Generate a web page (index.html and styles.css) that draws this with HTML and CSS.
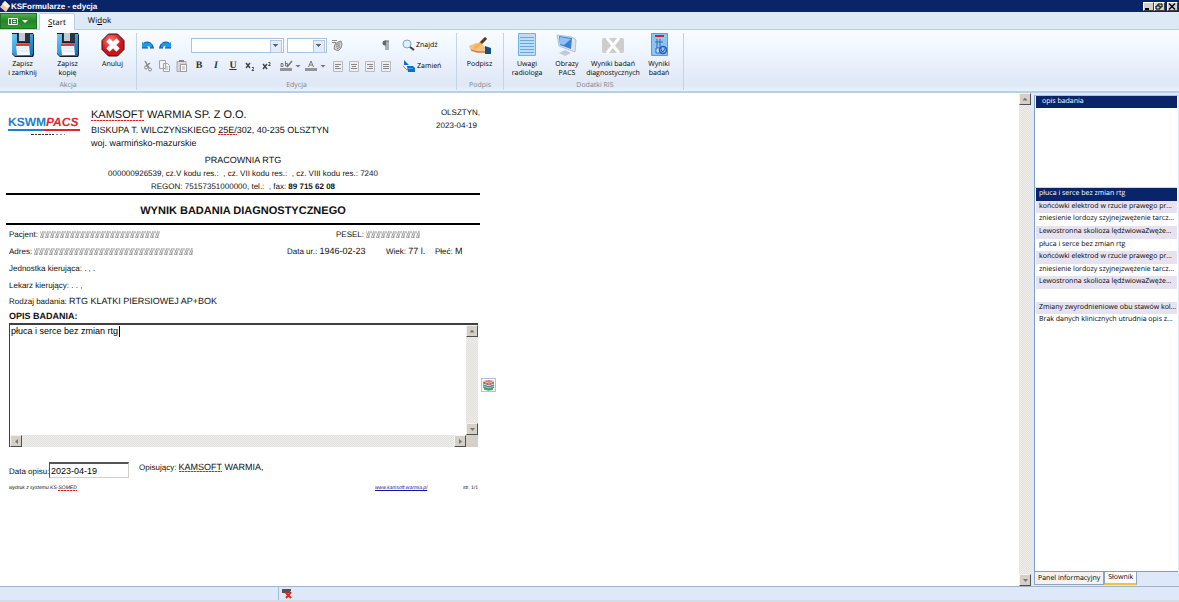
FILE: index.html
```html
<!DOCTYPE html>
<html lang="pl">
<head>
<meta charset="utf-8">
<title>KSFormularze - edycja</title>
<link rel="stylesheet" href="styles.css">
</head>
<body>
<svg class="defs" width="0" height="0" aria-hidden="true">
  <defs>
    <linearGradient id="blue" x1="0" y1="0" x2="1" y2="1"><stop offset="0" stop-color="#6ccdf6"/><stop offset="1" stop-color="#0f6ab8"/></linearGradient>
    <radialGradient id="red" cx=".4" cy=".3"><stop offset="0" stop-color="#ff7a70"/><stop offset="1" stop-color="#d01218"/></radialGradient>
    <pattern id="smear" width="5" height="8" patternUnits="userSpaceOnUse"><path d="M0 7 3 0M2 7 5 0M0 0l3 7M3 0v7M0 6l3 1" stroke="#8c8c8c" stroke-width=".6" fill="none"/></pattern>
    <symbol id="floppy" viewBox="0 0 24 24"><path d="M1 0h21l1 2v20l-1 2H4l-3-3z" fill="#16202a"/><path d="M1 1h5v9h13V1h3v20l-1 2H4l-3-3z" fill="url(#blue)"/><path d="M7 0h12v9H7z" fill="#2a343d"/><path d="M8 0h6v8H8z" fill="#c3ccd3"/><path d="M5 12h13l1 10H6z" fill="#f6f8fb"/><path d="M5 11h13v2H5z" fill="#e03a3a"/><path d="M7 15h10M7 18h10" stroke="#dce2e9"/></symbol>
    <symbol id="undo" viewBox="0 0 12 8"><path d="M0 7V1l2 1c3-2 8-1 10 5H8c0-2-2-2-3-1l1 1z" fill="#1e9be8"/><path d="M2 2c3-2 8-1 9 4M0 7h6M8 7h4" stroke="#0b4da8" fill="none"/></symbol>
  </defs>
</svg>
<header class="title">
  <svg width="10" height="11" viewBox="0 0 10 11"><path d="M5 0l5 5-4 6-6-5z" fill="#f3c9a5"/><path d="M5 0l5 5-3 2-5-4z" fill="#fff3e6"/></svg>
  <h1>KSFormularze - edycja</h1>
  <div class="winbtns">
    <button aria-label="Minimalizuj"><svg width="8" height="7"><path d="M1 6h4" stroke="#000" stroke-width="2"/></svg></button><button aria-label="Przywróć"><svg width="8" height="7"><path d="M3 3V1h4v3H5M1 3h4v3H1z" stroke="#000" fill="none"/></svg></button><button class="close" aria-label="Zamknij"><svg width="8" height="7"><path d="M1 .5l6 6M7 .5l-6 6" stroke="#000" stroke-width="1.400"/></svg></button>
  </div>
</header>
<nav class="tabs">
  <button class="app" aria-label="Menu"><svg width="23" height="9" viewBox="0 0 23 9"><path d="M1.500 1.500h9v6h-9zM4.500 1v7M6 3.500h3M6 5.500h3" stroke="#fff" fill="none"/><path d="M15 3h6l-3 3z" fill="#fff"/></svg></button>
  <button class="tab on"><u>S</u>tart</button>
  <button class="tab">Wi<u>d</u>ok</button>
</nav>
<section class="ribbon">
  <div class="group g-action">
    <div class="tools">
      <button class="big"><svg width="24" height="24"><use href="#floppy"/></svg>Zapisz<br>i zamknij</button>
      <button class="big"><svg width="24" height="24"><use href="#floppy"/></svg>Zapisz<br>kopię</button>
      <button class="big"><svg width="24" height="24" viewBox="0 0 24 24"><path d="M7.500 1h9L23 7.500v9L16.500 23h-9L1 16.500v-9z" fill="url(#red)" stroke="#3b1010"/><path d="M7 7l10 10M17 7L7 17" stroke="#c9c9c9" stroke-width="5"/><path d="M7 7l10 10M17 7L7 17" stroke="#fff" stroke-width="4"/></svg>Anuluj</button>
    </div>
    <h2>Akcja</h2>
  </div>
  <div class="group g-edit">
    <div class="tools edit">
      <div class="line">
        <button class="ic" aria-label="Cofnij"><svg width="12" height="8"><use href="#undo"/></svg></button>
        <button class="ic flip" aria-label="Ponów"><svg width="12" height="8"><use href="#undo"/></svg></button>
        <span class="combo font"><select aria-label="Czcionka"><option></option></select></span>
        <span class="combo size"><select aria-label="Rozmiar"><option></option></select></span>
        <button class="ic brush" aria-label="Hiperłącze"><svg width="12" height="12" viewBox="0 0 12 12"><path d="M1 1.500h5M1 3.500h4" stroke="#888"/><path d="M4 5l3-2 3-1 1 3-1 4-3 3-4-2z" fill="#d0d0d0" stroke="#8a8a8a"/><path d="M5 6l4-2M5 8l4-2M6 10l3-2" stroke="#888"/></svg></button>
        <button class="ic para" aria-label="Znaki akapitu"><svg width="10" height="10" viewBox="0 0 10 10"><path d="M8 1H4M5 1v9M7 1v9" stroke="#666" fill="none"/><path d="M5 .5H4a2 2 0 0 0 0 5h1z" fill="#666"/></svg></button>
        <button class="cmd"><svg width="13" height="12" viewBox="0 0 13 12"><circle cx="5" cy="5" r="4" fill="#d9f3fa" stroke="#8aa3ac"/><path d="M8 8l4 3" stroke="#39444a" stroke-width="2"/></svg>Znajdź</button>
      </div>
      <div class="line">
        <button class="ic" aria-label="Wytnij"><svg width="10" height="12" viewBox="0 0 10 12"><path d="M2 1l4 7M7 3L3 6" stroke="#888" stroke-width="1.500"/><circle cx="3" cy="7.500" r="1.500" fill="none" stroke="#888"/><circle cx="7" cy="9.500" r="1.500" fill="none" stroke="#888"/></svg></button>
        <button class="ic" aria-label="Kopiuj"><svg width="12" height="12" viewBox="0 0 12 12"><path d="M.5.5h6v8h-6zM4.500 3.500h4l2 2v6h-6z" fill="#f3f3f3" stroke="#a4a4a4"/><path d="M6 7h3M6 9h3" stroke="#b5b5b5"/></svg></button>
        <button class="ic" aria-label="Wklej"><svg width="12" height="12" viewBox="0 0 12 12"><path d="M1 1.500h9v10H1z" fill="#d7d7d7" stroke="#aaa"/><path d="M4.500 4.500h6v7h-6z" fill="#fafafa" stroke="#999"/><path d="M3 1h5" stroke="#888" stroke-width="2"/><path d="M6 7h3M6 9h3" stroke="#aaa"/></svg></button>
        <button class="ic ch" aria-label="Pogrubienie"><b>B</b></button>
        <button class="ic ch" aria-label="Kursywa"><b><i>I</i></b></button>
        <button class="ic ch" aria-label="Podkreślenie"><b><u>U</u></b></button>
        <button class="ic" aria-label="Indeks dolny"><svg width="10" height="10" viewBox="0 0 10 10"><path d="M1 2l4 5M5 2L1 7" stroke="#444" stroke-width="1.500"/><path d="M7 6.500h1.500v1L7 9.500h2" stroke="#444" fill="none"/></svg></button>
        <button class="ic" aria-label="Indeks górny"><svg width="10" height="10" viewBox="0 0 10 10"><path d="M1 3l4 5M5 3L1 8" stroke="#444" stroke-width="1.500"/><path d="M6.500 1.500H8v1L6.500 4.500h2" stroke="#444" fill="none"/></svg></button>
        <button class="ic hi" aria-label="Kolor wyróżnienia"><svg width="13" height="12" viewBox="0 0 13 12"><path d="M1 3.500h2v3H1zM5.500 1v5h2V3.500h-2" stroke="#777" fill="none"/><path d="M7 7l5-6" stroke="#777" stroke-width="1.500"/><path d="M0 8h12v3H0z" fill="#949494"/></svg></button>
        <button class="drop" aria-label="Wybierz wyróżnienie"></button>
        <button class="ic" aria-label="Kolor tekstu"><svg width="13" height="12" viewBox="0 0 13 12"><path d="M3.500 7L6 1l2.500 6M4.500 5h3" stroke="#777" fill="none"/><path d="M0 8h12v3H0z" fill="#949494"/></svg></button>
        <button class="drop" aria-label="Wybierz kolor tekstu"></button>
        <span class="aligns">
        <button class="ic" aria-label="Do lewej"><svg width="10" height="11"><path d="M.5.5h9v10h-9z" fill="#eee" stroke="#bbb"/><path d="M2 3.500h6M2 5.500h4M2 7.500h6" stroke="#888"/></svg></button>
        <button class="ic" aria-label="Do środka"><svg width="10" height="11"><path d="M.5.5h9v10h-9z" fill="#eee" stroke="#bbb"/><path d="M2 3.500h6M3 5.500h4M2 7.500h6" stroke="#888"/></svg></button>
        <button class="ic" aria-label="Do prawej"><svg width="10" height="11"><path d="M.5.5h9v10h-9z" fill="#eee" stroke="#bbb"/><path d="M2 3.500h6M4 5.500h4M2 7.500h6" stroke="#888"/></svg></button>
        <button class="ic" aria-label="Wyjustuj"><svg width="10" height="11"><path d="M.5.5h9v10h-9z" fill="#eee" stroke="#bbb"/><path d="M2 3.500h6M2 5.500h6M2 7.500h6" stroke="#888"/></svg></button>
        </span>
        <button class="cmd"><svg width="13" height="12" viewBox="0 0 13 12"><path d="M1 5V0l5 5zM4 6h6l2 2v4H5z" fill="#1769c4"/><path d="M0 6l4 4 2-2M6 8.500h4" stroke="#33b0e8" fill="none"/></svg>Zamień</button>
      </div>
    </div>
    <h2>Edycja</h2>
  </div>
  <div class="group g-sign">
    <div class="tools">
      <button class="big"><svg width="24" height="24" viewBox="0 0 24 24"><path d="M1 13l7-3 6 1 4 4v5H9l-6-2z" fill="#f2bf8e"/><path d="M3 17l7 2h8" stroke="#b9713c" fill="none"/><path d="M17 13l6 2v6h-6z" fill="#144f86"/><path d="M5 15l12-11 2 2L8 16z" fill="#f7b62d"/><path d="M12 9l5-5 2 2-5 5z" fill="#4b3a22"/></svg>Podpisz</button>
    </div>
    <h2>Podpis</h2>
  </div>
  <div class="group g-ris">
    <div class="tools">
      <button class="big"><svg width="24" height="24" viewBox="0 0 24 24"><path d="M3.500.5h17v22h-17z" fill="#b9ddfa" stroke="#6db4ea"/><path d="M5 4.500h14M5 7.500h14M5 10.500h14M5 13.500h14M5 16.500h14M5 19.500h14" stroke="#6aa9de"/></svg>Uwagi<br>radiologa</button>
      <button class="big"><svg width="24" height="24" viewBox="0 0 24 24"><path d="M2 2l15 2 4 3-1 12-16-6z" fill="#d9e5f1" stroke="#b4c2d0"/><path d="M4 3l13 2-1 11-11-4z" fill="#3b80d3"/><path d="M5 4l11 2-7 6-4-1z" fill="#8fc2f5"/><path d="M10 17l-6 3 6 3 6-3z" fill="#c2cbd5"/></svg>Obrazy<br>PACS</button>
      <button class="big wide"><svg width="24" height="24" viewBox="0 0 24 24"><rect x="1" y="5" width="22" height="15" rx="2" fill="#cdcdcd"/><path d="M6 5l12 15M18 5L6 20" stroke="#fff" stroke-width="3"/></svg>Wyniki badań<br>diagnostycznych</button>
      <button class="big narrow"><svg width="24" height="24" viewBox="0 0 24 24"><path d="M4.500.5h16v22h-16z" fill="#8cc4f4" stroke="#5a9cdb"/><path d="M8 3h9" stroke="#e71919" stroke-width="2"/><path d="M10 6v9M13 6v9M8 9h8M9 15h5v5H9z" stroke="#356cb0" fill="#c3e2ff"/><circle cx="16" cy="17" r="3.500" fill="none" stroke="#2759c7" stroke-width="1.500"/><path d="M14 17l2 2 3-5" stroke="#2759c7" fill="none"/></svg>Wyniki<br>badań</button>
    </div>
    <h2>Dodatki RIS</h2>
  </div>
</section>
<main class="body">
  <div class="page">
    <article class="doc">
      <div class="head">
        <svg class="logo" width="72" height="26" viewBox="0 0 72 26" role="img" aria-label="KSWMPACS"><text x="0" y="12" class="lg blue">KSWM</text><text x="38" y="12" class="lg redt">PACS</text><path d="M0 16h36" stroke="#1e7fd0" stroke-width="2"/><path d="M36 16h36" stroke="#e8242b" stroke-width="2"/><path d="M23 20.500h23" stroke="#333" stroke-dasharray="3 1 2 1"/><path d="M48 20.500h9" stroke="#888" stroke-dasharray="2"/></svg>
        <address>
          <p class="firm"><span class="err">KAMSOFT</span> WARMIA SP. Z O.O.</p>
          <p class="street">BISKUPA T. WILCZYŃSKIEGO <span class="err">25E/</span>302, 40-235 OLSZTYN</p>
          <p class="woj">woj. warmińsko-mazurskie</p>
        </address>
        <p class="place">OLSZTYN,<br><span>2023-04-19</span></p>
      </div>
      <div class="lab">
        <p class="room">PRACOWNIA RTG</p>
        <p>000000926539, cz.V kodu res.: &nbsp;, cz. VII kodu res.: &nbsp;, cz. VIII kodu res.: 7240</p>
        <p>REGON: 75157351000000, tel.: &nbsp;, fax: <b>89 715 62 08</b></p>
      </div>
      <h3>WYNIK BADANIA DIAGNOSTYCZNEGO</h3>
      <div class="rows">
        <p class="pair"><span>Pacjent: <svg width="120" height="7"><rect width="120" height="7" fill="url(#smear)"/></svg></span><span class="pesel">PESEL: <svg width="54" height="7"><rect width="54" height="7" fill="url(#smear)"/></svg></span></p>
        <p class="pair"><span>Adres: <svg width="159" height="7"><rect width="159" height="7" fill="url(#smear)"/></svg></span><span>Data ur.: <em>1946-02-23</em></span><span>Wiek: <em>77 l.</em></span><span>Płeć: <em>M</em></span></p>
        <p>Jednostka kierująca: . , .</p>
        <p>Lekarz kierujący: . . ,</p>
        <p class="kind">Rodzaj badania: <em>RTG KLATKI PIERSIOWEJ AP+BOK</em></p>
      </div>
      <label class="opis" for="opis">OPIS BADANIA:</label>
      <div class="editor">
        <div class="memo">
          <textarea id="opis" spellcheck="false">płuca i serce bez zmian rtg</textarea>
          <i class="caret"></i>
          <div class="bar v"><button class="up" aria-label="W górę"></button><button class="down" aria-label="W dół"></button></div>
          <div class="bar h"><button class="left" aria-label="W lewo"></button><button class="right" aria-label="W prawo"></button></div>
          <div class="corner"></div>
        </div>
        <button class="dict" aria-label="Słownik"><svg width="13" height="12" viewBox="0 0 13 12"><path d="M1 2l6-1 5 1-5 2z" fill="#c98472"/><path d="M1 3l6 2 5-2M1 4l6 2 5-2" stroke="#b95d4c" fill="none"/><path d="M1 6l6 2 5-2" stroke="#4f84bf" fill="none" stroke-width="1.500"/><path d="M1 8l6 2 5-2M2 10l5 1 4-1" stroke="#4c9f65" fill="none" stroke-width="1.500"/></svg></button>
      </div>
      <div class="sign">
        <label for="data">Data opisu:</label><input id="data" value="2023-04-19">
        <p>Opisujący: <em><span class="err">KAMSOFT</span> WARMIA,</em></p>
      </div>
      <footer class="foot"><i>wydruk z systemu KS-<span class="err">SOMED</span></i><a href="#"><i>www.<span class="err">kamsoft.warmia</span>.pl</i></a><span>str. 1/1</span></footer>
    </article>
  </div>
  <div class="bar v main"><button class="up" aria-label="W górę"></button><button class="down" aria-label="W dół"></button></div>
  <aside class="side">
    <div class="panel">
      <ul class="cats"><li class="sel">opis badania</li></ul>
      <ul class="phrases">
        <li class="sel">płuca i serce bez zmian rtg</li>
        <li>końcówki elektrod w rzucie prawego pr...</li>
        <li>zniesienie lordozy szyjnejzwężenie tarcz...</li>
        <li>Lewostronna skolioza lędźwiowaZwęże...</li>
        <li>płuca i serce bez zmian rtg</li>
        <li>końcówki elektrod w rzucie prawego pr...</li>
        <li>zniesienie lordozy szyjnejzwężenie tarcz...</li>
        <li>Lewostronna skolioza lędźwiowaZwęże...</li>
        <li></li>
        <li>Zmiany zwyrodnieniowe obu stawów kol...</li>
        <li>Brak danych klinicznych utrudnia opis z...</li>
      </ul>
    </div>
    <div class="sidetabs"><button>Panel informacyjny</button><button class="on">Słownik</button></div>
  </aside>
</main>
<footer class="status"><div></div><div><svg width="13" height="11" viewBox="0 0 13 11"><path d="M1 2h9M1 4h8" stroke="#222" stroke-width="1.500"/><path d="M4 4l6 6M10 4l-5 6" stroke="#e3261b" stroke-width="2"/></svg></div></footer>
</body>
</html>
```
FILE: styles.css
```css
* { box-sizing: border-box; margin: 0; padding: 0; }
body { height: 100vh; display: flex; flex-direction: column; overflow: hidden; background: #fff; color: #000; font: 7px/9px "Open Sans", "Liberation Sans", sans-serif; text-rendering: geometricPrecision; }
button { border: 0; background: none; font: inherit; color: inherit; text-rendering: inherit; }
.defs { position: absolute; }
ul { list-style: none; }
em { font: 9px "Liberation Sans", Arial, sans-serif; }
svg { display: block; flex: none; }

.title { height: 12px; background: #0a246a; color: #fff; display: flex; align-items: center; }
.title h1 { font: bold 8px "Liberation Sans", Arial, sans-serif; flex: 1; padding-left: 1px; }
.winbtns { display: flex; padding-right: 1px; }
.winbtns button { width: 11px; height: 9px; background: #d4d0c8; border: 1px solid; border-color: #fff #404040 #404040 #fff; }
.winbtns .close { margin-left: 2px; }

.tabs { height: 18px; background: #dde9f5; display: flex; align-items: flex-end; border-bottom: 1px solid #b9cfe6; }
.tabs .app { width: 37px; height: 16px; background: linear-gradient(#4fae45, #1f8526 50%, #2c9a35); border: 1px solid #1d7324; display: flex; align-items: center; padding-left: 6px; margin-right: 2px; }
.tab { height: 17px; padding: 0 10px; font-size: 8px; }
.tab.on { margin-bottom: -1px; background: #fafcff; border: 1px solid #b9cfe6; border-bottom: 0; border-radius: 2px 2px 0 0; margin-right: 3px; padding: 0 8px; }

.ribbon { height: 63px; display: flex; background: linear-gradient(#fafcff, #f1f8ff 25%, #e8effb 60%, #dfe8f5 90%, #e8f1fc); border-bottom: 2px solid #b9cfe6; }
.group { display: flex; flex-direction: column; border-right: 1px solid #c5d3e4; margin: 3px 0 1px; }
.group h2 { font-size: 7px; font-weight: normal; line-height: 9px; color: #7f868e; text-align: center; }
.tools { flex: 1; display: flex; align-items: flex-start; }
.big { width: 45px; display: flex; flex-direction: column; align-items: center; white-space: nowrap; line-height: 9px; }
.big svg { margin-bottom: 3px; }
.g-action { width: 137px; }
.g-edit { width: 320px; }
.g-sign { width: 47px; }
.g-ris { width: 180px; padding-left: 3px; }
.g-ris .big { width: 40px; }
.g-ris .wide { width: 52px; }
.edit { flex-direction: column; gap: 5px; padding: 4px 0 0 3px; }
.line { display: flex; gap: 1px; align-items: center; height: 16px; }
.ic { width: 16px; height: 16px; display: flex; align-items: center; justify-content: center; }
.flip svg { transform: scaleX(-1); }
.combo { display: flex; height: 15px; border: 1px solid #a8c3df; background: #fff; position: relative; }
.combo select { appearance: none; border: 0; width: 100%; background: none; }
.combo::after { content: ""; position: absolute; right: 1px; top: 1px; width: 10px; height: 11px; border: 1px solid #b4c7de; pointer-events: none; background: linear-gradient(#5a6a7c, #5a6a7c) 2px 3px / 5px 1px no-repeat, linear-gradient(#5a6a7c, #5a6a7c) 3px 4px / 3px 1px no-repeat, linear-gradient(#5a6a7c, #5a6a7c) 4px 5px / 1px 1px no-repeat, #e2ebf8; }
.font { width: 93px; margin-left: 17px; }
.size { width: 40px; margin-left: 2px; }
.brush { margin-left: 1px; }
.para { margin-left: 32px; }
.cmd { display: flex; align-items: center; gap: 1px; margin-left: 7px; }
.ch { font: 10px/10px "Liberation Serif", serif; color: #333; }
.hi { margin-left: 2px; }
.drop { width: 6px; height: 3px; background: #777; clip-path: polygon(0 0, 100% 0, 50% 100%); margin-right: 1px; }
.aligns { display: flex; margin-left: 2px; }
.aligns + .cmd { margin-left: 8px; }

.body { flex: 1; min-height: 0; display: flex; }
.page { flex: 1; min-width: 0; overflow: hidden; padding: 15px 0 0 6px; }
.doc { width: 490px; color: #111; font-family: "Liberation Sans", Arial, sans-serif; font-size: 8px; }
.head { display: flex; padding-left: 2px; height: 44px; width: 474px; }
.logo { margin: 6px 11px 0 0; }
.lg { font: bold 12px "Liberation Sans", Arial, sans-serif; }
.blue { fill: #1e7fd0; }
.redt { fill: #e8242b; font-style: italic; }
.head address { font-style: normal; flex: 1; white-space: nowrap; }
.firm { font-size: 11px; line-height: 15px; }
.street { font-size: 9px; line-height: 14px; }
.woj { font-size: 9px; line-height: 13px; }
.place { text-align: right; line-height: 13px; margin-top: -2px; }
.place span { padding-right: 3px; }
.err { background: repeating-linear-gradient(90deg, #e02020 0 2px, #f5a0a0 2px 3px) 0 100% / 100% 1px no-repeat; }
.lab { text-align: center; line-height: 13px; width: 474px; border-bottom: 2px solid #000; }
.room { font-size: 9px; line-height: 14px; padding-top: 1px; }
.doc h3 { font-size: 11px; line-height: 28px; height: 30px; width: 474px; padding-top: 2px; text-align: center; border-bottom: 2px solid #000; }
.rows { padding: 1px 0 0 3px; }
.rows p { line-height: 17px; height: 17px; }
.rows .kind { line-height: 16px; height: 16px; }
.rows svg { display: inline-block; vertical-align: -1px; }
.pair { display: grid; grid-template-columns: 278px 99px 49px 1fr; white-space: nowrap; }
.pesel { grid-column: 2; padding-left: 49px; }
.opis { display: block; font-size: 9px; font-weight: bold; line-height: 13px; padding-left: 3px; }
.editor { display: flex; align-items: center; gap: 3px; padding-left: 3px; }
.memo { position: relative; width: 470px; height: 124px; display: grid; grid-template: 1fr 12px / 1fr 12px; border: solid #404040; border-width: 2px 0 0 1px; }
.memo textarea { border: 0; outline: 0; resize: none; overflow: hidden; font: 9px/12px "Liberation Sans", Arial, sans-serif; padding-left: 1px; }
.caret { position: absolute; left: 109px; top: 1px; width: 1px; height: 11px; background: #000; }
.bar { background: repeating-conic-gradient(#e2e0dc 0 25%, #efeeec 0 50%) 0 0 / 2px 2px; display: flex; justify-content: space-between; }
.bar.v { flex-direction: column; }
.bar button { width: 12px; height: 12px; background: #d4d0c8; border: 1px solid; border-color: #f4f2ee #505050 #505050 #f4f2ee; display: flex; align-items: center; justify-content: center; }
.bar button::before { content: ""; width: 5px; height: 3px; background: #777; clip-path: polygon(50% 0, 100% 100%, 0 100%); }
.bar .down::before { transform: rotate(180deg); }
.bar .left::before { transform: rotate(-90deg); }
.bar .right::before { transform: rotate(90deg); }
.corner { background: #d4d0c8; }
.dict { width: 15px; height: 14px; border: 1px solid #a9c6de; display: flex; align-items: center; justify-content: center; }
.sign { display: flex; padding: 15px 0 0 3px; height: 32px; }
.sign label { line-height: 20px; width: 40px; white-space: nowrap; }
.sign input { width: 80px; height: 16px; border: 1px solid #d4d0c8; border-top: 2px solid #555; border-left: 1px solid #555; padding-left: 1px; font: 9px "Liberation Sans", Arial, sans-serif; }
.sign p { padding-left: 10px; line-height: 9px; }
.foot { display: flex; justify-content: space-between; width: 472px; padding: 5px 0 0 3px; font-size: 5px; line-height: 9px; }
.foot > i { width: 366px; }
.foot > a { flex: 1; color: #1515a0; }
.main { width: 12px; }

.side { width: 148px; display: flex; flex-direction: column; background: #dde9fb; padding: 2px 1px 1px 3px; }
.panel { flex: 1; background: #fff; border: 1px solid #7f9fc0; border-top-color: #a9c3de; border-right: 0; padding-right: 1px; }
.cats { height: 92px; border-bottom: 1px solid #c5d9ee; }
.cats li { padding-left: 6px; line-height: 12px; height: 12px; margin-left: 1px; }
.phrases { display: grid; grid-template-rows: repeat(11, 1fr); height: 139px; padding-left: 1px; }
.phrases li { padding-left: 3px; line-height: 12px; white-space: nowrap; }
.phrases li:nth-child(even) { background: #e6e2f0; }
.side .sel { background: #0a246a; color: #fff; }
.sidetabs { display: flex; height: 13px; }
.sidetabs button { background: #f2f2f2; border: 1px solid #8ba6c4; border-top: 0; padding: 0 3px; white-space: nowrap; }
.sidetabs .on { background: #fff; border-bottom: 2px solid #f0c040; }

.status { height: 16px; display: flex; background: #dde9fb; border-top: 1px solid #9fb4cc; border-bottom: 2px solid #d8dce2; }
.status div { display: flex; align-items: center; }
.status div:first-child { width: 279px; border-right: 1px solid #a9bdd6; margin-right: 2px; }
```
